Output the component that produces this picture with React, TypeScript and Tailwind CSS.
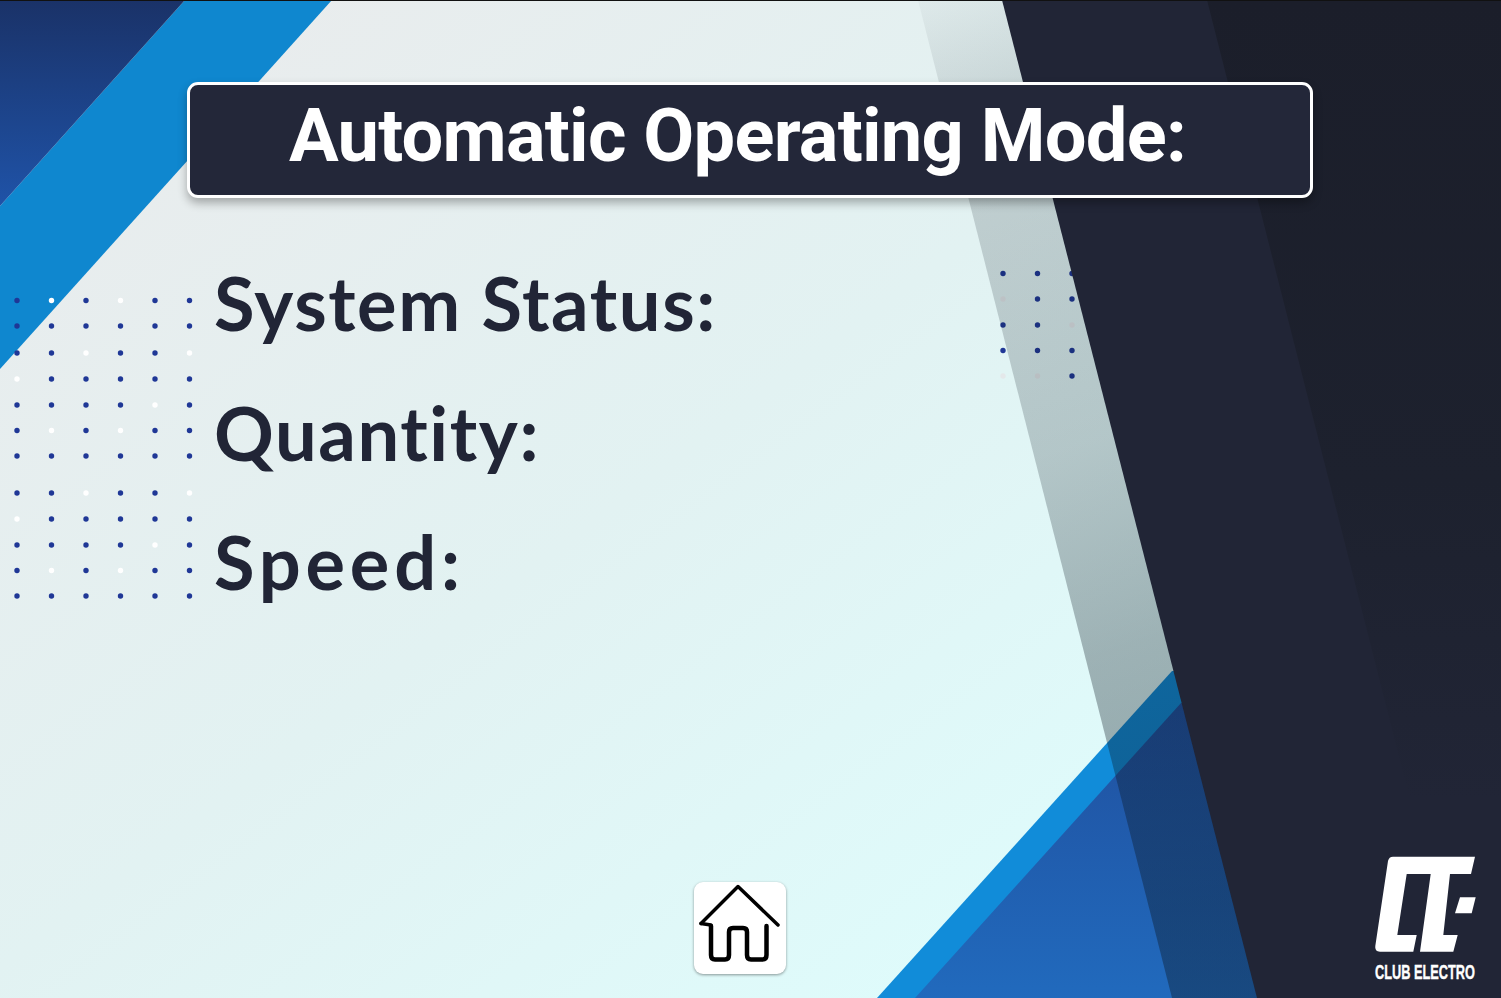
const navy = "#1f3796";

// 1 = blue dot, 0 = white dot
const LEFT_DOT_ROWS: [number, number[]][] = [
  [300.5, [1, 0, 1, 0, 1, 1]],
  [326, [1, 1, 1, 1, 1, 1]],
  [353, [1, 1, 0, 1, 1, 0]],
  [379, [0, 1, 1, 1, 1, 1]],
  [405, [1, 1, 1, 1, 0, 1]],
  [430.5, [1, 0, 1, 0, 1, 1]],
  [456, [1, 1, 1, 1, 1, 1]],
  [493, [1, 1, 0, 1, 1, 0]],
  [519, [0, 1, 1, 1, 1, 1]],
  [545, [1, 1, 1, 1, 0, 1]],
  [570.5, [1, 0, 1, 0, 1, 1]],
  [596, [1, 1, 1, 1, 1, 1]],
];
const LEFT_DOT_COLS = [17, 51.5, 86, 120.5, 155, 189.5];

const RIGHT_DOT_ROWS: [number, number[]][] = [
  [273.5, [1, 1, 1]],
  [299, [0, 1, 1]],
  [325, [1, 1, 0]],
  [350.5, [1, 1, 1]],
  [376, [0, 0, 1]],
];
const RIGHT_DOT_COLS = [1003, 1037.5, 1072];

function Background() {
  return (
    <svg className="absolute inset-0" width="1501" height="998" viewBox="0 0 1501 998">
      <defs>
        <linearGradient id="page" gradientUnits="userSpaceOnUse" x1="250" y1="0" x2="1000" y2="998">
          <stop offset="0" stopColor="#e9eced" />
          <stop offset="0.5" stopColor="#e2f2f2" />
          <stop offset="1" stopColor="#defcfc" />
        </linearGradient>
        <linearGradient id="cornerDark" x1="0" y1="0" x2="0" y2="1">
          <stop offset="0" stopColor="#1a3268" />
          <stop offset="1" stopColor="#1f53a8" />
        </linearGradient>
        <linearGradient id="triangle" x1="0" y1="0" x2="0" y2="1">
          <stop offset="0" stopColor="#20509f" />
          <stop offset="1" stopColor="#216abd" />
        </linearGradient>
        <linearGradient id="shade" gradientUnits="userSpaceOnUse" x1="925" y1="0" x2="1200" y2="900">
          <stop offset="0" stopColor="#0a141e" stopOpacity="0.03" />
          <stop offset="0.15" stopColor="#0a141e" stopOpacity="0.15" />
          <stop offset="0.5" stopColor="#0a141e" stopOpacity="0.21" />
          <stop offset="0.72" stopColor="#0a141e" stopOpacity="0.31" />
          <stop offset="1" stopColor="#0a141e" stopOpacity="0.38" />
        </linearGradient>
        <linearGradient id="sliver" x1="0" y1="0" x2="0" y2="1">
          <stop offset="0" stopColor="#1b1e2a" />
          <stop offset="0.6" stopColor="#1d212e" />
          <stop offset="1" stopColor="#212536" />
        </linearGradient>
      </defs>

      <rect width="1501" height="998" fill="url(#page)" />
      <polygon points="185,0 332,0 0,369 0,206" fill="#0f87cf" />
      <polygon points="0,0 185,0 0,206" fill="url(#cornerDark)" />

      {LEFT_DOT_ROWS.map(([y, row]) =>
        row.map((blue, i) => (
          <circle key={`${y}-${i}`} cx={LEFT_DOT_COLS[i]} cy={y} r="2.7" fill={blue ? navy : "#fff"} />
        )),
      )}
      {RIGHT_DOT_ROWS.map(([y, row]) =>
        row.map((blue, i) => (
          <circle key={`${y}-${i}`} cx={RIGHT_DOT_COLS[i]} cy={y} r="2.7" fill={blue ? navy : "#e4e8ea"} />
        )),
      )}

      <polygon points="1172,671 1200,671 1300,998 877,998" fill="#118cd9" />
      <polygon points="1181,703 1300,703 1300,998 915,998" fill="url(#triangle)" />
      <polygon points="918,0 1010,0 1265,998 1172,998" fill="url(#shade)" />

      <polygon points="1002,0 1501,0 1501,998 1257,998" fill="#212536" />
      <polygon points="1207,0 1501,0 1501,800 1410,800" fill="url(#sliver)" />
      <rect width="1501" height="1" fill="#111" />
    </svg>
  );
}

function HomeButton() {
  return (
    <div className="w-[92px] h-[92px] rounded-[9px] bg-white shadow-[0_1px_3px_rgba(0,0,0,0.4)]">
      <svg width="92" height="92" viewBox="694 882 92 92" fill="none" stroke="#000" strokeLinecap="round" strokeLinejoin="round">
        <path d="M701 923.5 L738 886.5 L778 925" strokeWidth="3.5" />
        <path d="M701 923.5 L711 925" strokeWidth="3.5" />
        <path
          d="M711 926 V955 Q711 959.5 715 959.5 H725 Q729 959.5 729 955 V932 Q729 928 733 928 H743 Q747 928 747 932 V955 Q747 959.5 751 959.5 H762.5 Q766.5 959.5 766.5 955 V926"
          strokeWidth="4.5"
        />
      </svg>
    </div>
  );
}

function Logo() {
  return (
    <svg className="overflow-visible" width="102" height="125" viewBox="0 0 102 125" fill="#fff">
      <path d="M18 0.7 H100 L96 18 H31.7 L22.3 79 H41.7 L38.3 95.7 H5 Q-0.5 95.7 0.3 90 L13 5 Q14 0.7 18 0.7 Z" />
      <polygon points="55.7,18 75,18 68.3,79 82.7,79 78.3,95.7 45,95.7" />
      <polygon points="85,41.3 100.7,41.3 96.7,57.3 80,57.3" />
      <text
        x="0"
        y="122.5"
        textLength="100"
        lengthAdjust="spacingAndGlyphs"
        fontFamily="'Liberation Sans', sans-serif"
        fontWeight="700"
        fontSize="20.5"
        stroke="#fff"
        strokeWidth="0.4"
      >
        CLUB ELECTRO
      </text>
    </svg>
  );
}

export default function App() {
  return (
    <div className="relative w-[1501px] h-[998px] overflow-hidden">
      <Background />

      <div className="relative flex flex-col h-full">
        <div className="ml-[187px] mt-[82px] w-[1126px] h-[116px] rounded-[11px] border-[3px] border-white bg-[#232739] shadow-[0_5px_10px_rgba(0,0,0,0.3)] flex items-center justify-center pr-[25px] pb-[9px]">
          <h1 className="font-['Roboto',sans-serif] font-bold text-[74px] tracking-[-0.75px] leading-none text-white whitespace-nowrap">
            Automatic Operating Mode:
          </h1>
        </div>

        <div className="ml-[214px] mt-[61px] flex flex-col gap-[41px] font-['Lato',sans-serif] font-bold text-[74px] tracking-[1.6px] leading-[88.5px] text-[#212536]">
          <p>System Status:</p>
          <p>Quantity:</p>
          <p className="tracking-[4.8px]">Speed:</p>
        </div>

        <div className="mt-auto mb-[24px] ml-[694px]">
          <HomeButton />
        </div>
      </div>

      <div className="absolute left-[1375px] top-[856px]">
        <Logo />
      </div>
    </div>
  );
}
